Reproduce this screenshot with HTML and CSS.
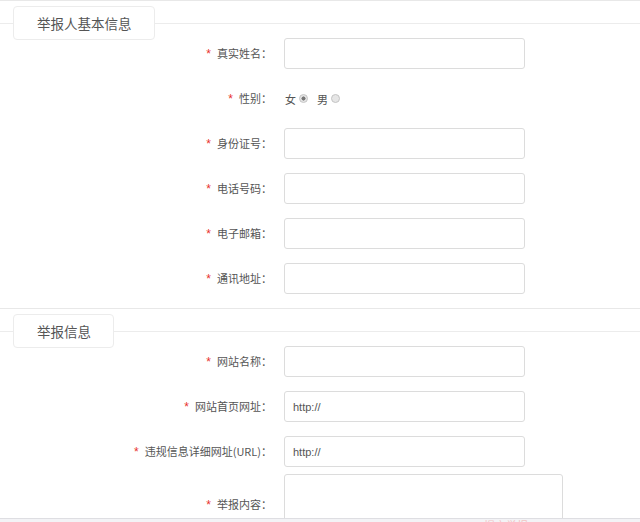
FILE: index.html
```html
<!DOCTYPE html>
<html lang="zh">
<head>
<meta charset="utf-8">
<link rel="stylesheet" href="styles.css">
</head>
<body>
<div class="section">
  <div class="sec-head"><span class="sec-title">举报人基本信息</span></div>
  <div class="form">
    <div class="row"><label class="lbl"><i class="req">*</i>真实姓名：</label><input class="ipt" type="text"></div>
    <div class="row"><label class="lbl"><i class="req">*</i>性别：</label>
      <div class="radios">
        <span class="opt">女</span><input class="rd" type="radio" name="sex" checked>
        <span class="opt opt2">男</span><input class="rd" type="radio" name="sex">
      </div>
    </div>
    <div class="row"><label class="lbl"><i class="req">*</i>身份证号：</label><input class="ipt" type="text"></div>
    <div class="row"><label class="lbl"><i class="req">*</i>电话号码：</label><input class="ipt" type="text"></div>
    <div class="row"><label class="lbl"><i class="req">*</i>电子邮箱：</label><input class="ipt" type="text"></div>
    <div class="row"><label class="lbl"><i class="req">*</i>通讯地址：</label><input class="ipt" type="text"></div>
  </div>
</div>
<div class="section">
  <div class="sec-head"><span class="sec-title">举报信息</span></div>
  <div class="form">
    <div class="row"><label class="lbl"><i class="req">*</i>网站名称：</label><input class="ipt" type="text"></div>
    <div class="row"><label class="lbl"><i class="req">*</i>网站首页网址：</label><input class="ipt" type="text" value="http://"></div>
    <div class="row"><label class="lbl"><i class="req">*</i>违规信息详细网址(URL)：</label><input class="ipt" type="text" value="http://"></div>
    <div class="row row-ta"><label class="lbl"><i class="req">*</i>举报内容：</label><textarea class="ta"></textarea></div>
  </div>
</div>
<div class="footbar"><span class="foot-text">提交举报</span></div>
</body>
</html>
```
FILE: styles.css
```css
html, body {
  margin: 0;
  padding: 0;
  background: #fff;
  font-family: "Noto Sans CJK SC", "Liberation Sans", sans-serif;
  color: #555;
  overflow: hidden;
}
.section {
  border-top: 1px solid #e8e8e8;
  padding-bottom: 14px;
}
.sec-head {
  position: relative;
  height: 34px;
  margin-top: 5px;
}
.sec-head::before {
  content: "";
  position: absolute;
  left: 0;
  right: 0;
  top: 17px;
  border-top: 1px solid #ececec;
}
.sec-title {
  position: relative;
  display: inline-block;
  margin-left: 13px;
  height: 32px;
  line-height: 32px;
  padding: 0 22px 0 23px;
  border: 1px solid #ececec;
  border-radius: 4px;
  background: #fff;
  font-size: 13.5px;
  color: #555;
}
.form {
  margin-top: -2px;
  display: flex;
  flex-direction: column;
  gap: 14px;
}
.row {
  display: flex;
  align-items: center;
  min-height: 31px;
}
.row-ta {
  margin-top: -7px;
}
.lbl {
  width: 272px;
  flex: none;
  text-align: right;
  font-size: 11px;
  line-height: 16px;
  color: #555;
  margin-right: 12px;
}
.req {
  font-style: normal;
  color: #e8322d;
  font-family: "Liberation Sans", sans-serif;
  font-size: 12px;
  margin-right: 6px;
}
.ipt {
  box-sizing: border-box;
  width: 241px;
  height: 31px;
  margin: 0;
  border: 1px solid #dcdcdc;
  border-radius: 3px;
  padding: 0 8px;
  font-family: "Liberation Sans", sans-serif;
  font-size: 11px;
  color: #555;
  outline: none;
}
.ta {
  box-sizing: border-box;
  width: 279px;
  height: 60px;
  margin: 0;
  border: 1px solid #dcdcdc;
  border-radius: 3px;
  resize: none;
  outline: none;
}
.radios {
  display: flex;
  align-items: center;
  font-size: 11px;
  line-height: 16px;
  margin-left: 1px;
}
.opt2 {
  margin-left: 9px;
}
.rd {
  -webkit-appearance: none;
  appearance: none;
  box-sizing: border-box;
  width: 9px;
  height: 9px;
  margin: 0 0 0 3px;
  border: 1px solid #c4c4c4;
  border-radius: 50%;
  background: #e6e6e6;
}
.rd:checked {
  background: radial-gradient(circle, #777 0, #777 1.8px, #e6e6e6 2.3px);
}
.footbar {
  position: fixed;
  left: 0;
  right: 0;
  top: 518px;
  height: 10px;
  border-top: 1px solid #dedee2;
  background: #f3f3f6;
  overflow: hidden;
}
.foot-text {
  position: absolute;
  left: 484px;
  top: 1px;
  font-size: 11px;
  line-height: 11px;
  color: #f2c4c4;
}
```
